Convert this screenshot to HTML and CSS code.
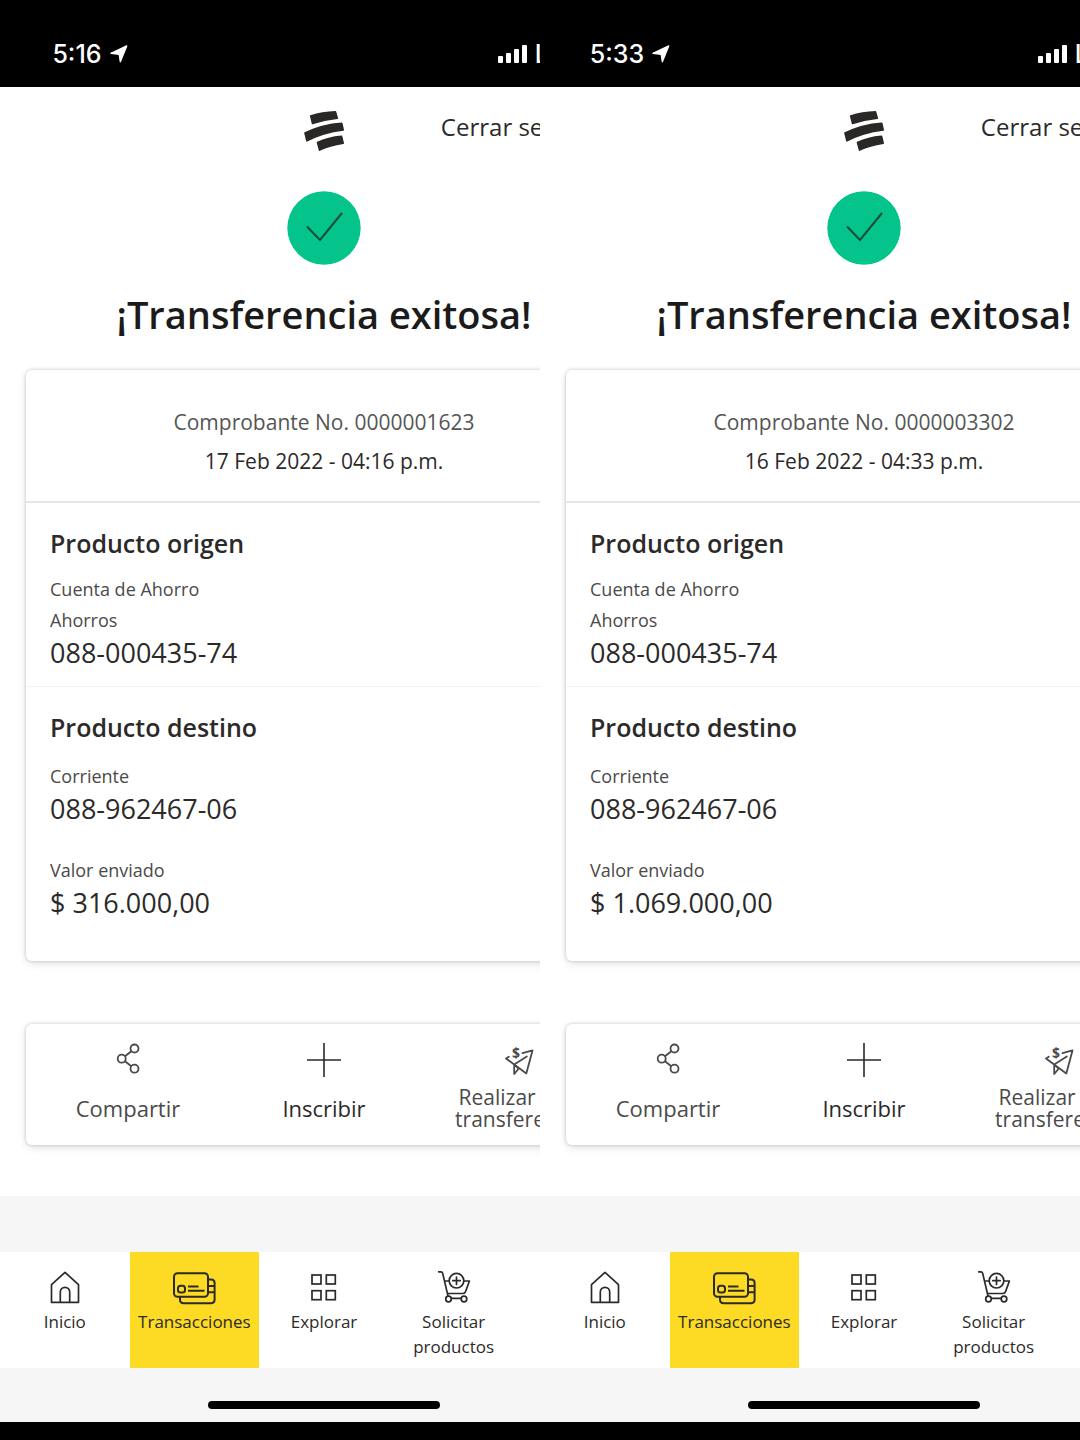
FILE: index.html
```
<!DOCTYPE html>
<html lang="es">
<head>
<meta charset="utf-8">
<meta name="viewport" content="width=device-width, initial-scale=1">
<title>Transferencia exitosa</title>
<link rel="stylesheet" href="styles.css">
</head>
<body>
<svg class="sprite" aria-hidden="true">
  <symbol id="i-location" viewBox="0 0 18 18"><path d="M1 8.300 16.700 1 10.300 16.700 9.300 9.400z" fill="currentColor" stroke="currentColor" stroke-width="1.400" stroke-linejoin="round"/></symbol>
  <symbol id="i-signal" viewBox="0 0 30 18"><g fill="currentColor"><rect y="11" width="5" height="7" rx="1"/><rect x="8" y="8" width="5" height="10" rx="1"/><rect x="16" y="4" width="5" height="14" rx="1"/><rect x="24" width="5" height="18" rx="1"/></g></symbol>
  <symbol id="i-logo" viewBox="0 0 40 40"><g fill="#2a2827" stroke="#2a2827" stroke-width="1.600" stroke-linejoin="round"><path d="M6.700 5Q18 1.500 31.500.9L33.300 7.300Q20 8.700 8.500 12.400z"/><path d="M1 22Q18 13.500 37.700 12.200L39.200 19Q19 21.500 2.900 29.900z"/><path d="M13.500 31.500Q24 26.500 37.500 25.300L39.200 32.300Q26 34.500 15.500 39.100z"/></g></symbol>
  <symbol id="i-check" viewBox="0 0 74 74"><circle cx="37" cy="37" r="36.700" fill="#04c48b"/><path d="M20 35.500 33 49 55 22" fill="none" stroke="#1d4a3c" stroke-width="2"/></symbol>
  <symbol id="i-share" viewBox="0 0 36 36"><g fill="none" stroke="currentColor" stroke-width="1.800"><circle cx="24.500" cy="6.500" r="4"/><circle cx="11.700" cy="16.700" r="4"/><circle cx="24.500" cy="26.700" r="4"/><path d="m15 14.200 6.300-5M15 19.200l6.300 5"/></g></symbol>
  <symbol id="i-plus" viewBox="0 0 36 36"><path d="M18 1v34M1 18h34" fill="none" stroke="currentColor" stroke-width="1.600"/></symbol>
  <symbol id="i-send" viewBox="0 0 36 36"><path d="m20.500 11.200 10-2.800-6.200 23L4 16.500l2.800-1.700M24.800 14.500 12.200 22.500V32l4.400-5.300M12.200 22.500l4.400 4.200" fill="none" stroke="currentColor" stroke-width="1.800" stroke-linejoin="round" stroke-linecap="round"/><text x="14" y="15.500" text-anchor="middle" class="coin">$</text></symbol>
  <symbol id="i-home" viewBox="0 0 36 36"><path d="M4.500 33.300V15.700L18 3.300l13.500 12.400v17.600zM13.300 33V23a4.700 4.700 0 0 1 9.400 0v10" fill="none" stroke="currentColor" stroke-width="1.700" stroke-linejoin="round"/></symbol>
  <symbol id="i-cards" viewBox="0 0 48 36"><g fill="none" stroke="currentColor" stroke-width="2"><rect x="4" y="4.200" width="34" height="23.500" rx="3.500"/><path d="M10 28v2.500q0 3.800 3.800 3.800h27q3.800 0 3.800-3.800V14q0-3.500-3.500-3.500H38M38 17h6.500M38 23.300h6.500"/><rect x="8" y="16.800" width="7" height="6.800" rx="2.500"/><path d="M18 17.500h10.500M18 21.800h16.500"/></g></symbol>
  <symbol id="i-grid" viewBox="0 0 36 36"><g fill="none" stroke="currentColor" stroke-width="1.700"><rect x="6" y="6" width="9" height="9"/><rect x="20.300" y="6" width="9" height="9"/><rect x="6" y="21.700" width="9" height="9"/><rect x="20.300" y="21.700" width="9" height="9"/></g></symbol>
  <symbol id="i-cart" viewBox="0 0 36 36"><g fill="none" stroke="currentColor" stroke-width="1.700" stroke-linejoin="round" stroke-linecap="round"><path d="M2.700 2.800h2.200q1.400 0 1.800 1.600L12 27M8.500 12H13M28 12h5.400l-3.800 10.500q-.7 2-2.600 2H11.600M15.500 29.300h9.500"/><circle cx="20.500" cy="11.700" r="7.300"/><path d="M20.500 8v7.400M16.800 11.700h7.400"/><circle cx="12.500" cy="30" r="2.800"/><circle cx="28" cy="30" r="2.800"/></g></symbol>
</svg>

<main class="panes">
  <section class="pane" aria-label="Comprobante 0000001623">
    <div class="phone">
      <div class="status">
        <div class="clock"><span>5:16</span><svg class="arrow"><use href="#i-location"/></svg></div>
        <div class="network"><svg class="signal"><use href="#i-signal"/></svg><span>LTE</span></div>
      </div>
      <div class="screen">
        <header class="top">
          <svg class="logo" role="img" aria-label="Inicio"><use href="#i-logo"/></svg>
          <a class="logout" href="#">Cerrar sesión</a>
        </header>
        <svg class="check"><use href="#i-check"/></svg>
        <h1 class="title">¡Transferencia exitosa!</h1>
        <article class="card">
          <div class="receipt">
            <p class="number">Comprobante No. 0000001623</p>
            <p class="date">17 Feb 2022 - 04:16 p.m.</p>
          </div>
          <section class="product">
            <h2>Producto origen</h2>
            <p class="label">Cuenta de Ahorro</p>
            <p class="label">Ahorros</p>
            <p class="value">088-000435-74</p>
          </section>
          <section class="product target">
            <h2>Producto destino</h2>
            <p class="label">Corriente</p>
            <p class="value">088-962467-06</p>
            <p class="label sent">Valor enviado</p>
            <p class="value">$ 316.000,00</p>
          </section>
        </article>
        <div class="card actions">
          <button type="button"><svg class="icon"><use href="#i-share"/></svg><span>Compartir</span></button>
          <button type="button" class="strong"><svg class="icon"><use href="#i-plus"/></svg><span>Inscribir</span></button>
          <button type="button" class="long"><svg class="icon"><use href="#i-send"/></svg><span>Realizar otra<br>transferencia</span></button>
        </div>
      </div>
      <nav class="tabs">
        <a href="#"><svg class="icon"><use href="#i-home"/></svg>Inicio</a>
        <a href="#" class="active" aria-current="page"><svg class="icon wide"><use href="#i-cards"/></svg>Transacciones</a>
        <a href="#"><svg class="icon"><use href="#i-grid"/></svg>Explorar</a>
        <a href="#"><svg class="icon"><use href="#i-cart"/></svg>Solicitar productos</a>
      </nav>
      <div class="home"><span></span></div>
    </div>
  </section>

  <section class="pane" aria-label="Comprobante 0000003302">
    <div class="phone">
      <div class="status">
        <div class="clock"><span>5:33</span><svg class="arrow"><use href="#i-location"/></svg></div>
        <div class="network"><svg class="signal"><use href="#i-signal"/></svg><span>LTE</span></div>
      </div>
      <div class="screen">
        <header class="top">
          <svg class="logo" role="img" aria-label="Inicio"><use href="#i-logo"/></svg>
          <a class="logout" href="#">Cerrar sesión</a>
        </header>
        <svg class="check"><use href="#i-check"/></svg>
        <h1 class="title">¡Transferencia exitosa!</h1>
        <article class="card">
          <div class="receipt">
            <p class="number">Comprobante No. 0000003302</p>
            <p class="date">16 Feb 2022 - 04:33 p.m.</p>
          </div>
          <section class="product">
            <h2>Producto origen</h2>
            <p class="label">Cuenta de Ahorro</p>
            <p class="label">Ahorros</p>
            <p class="value">088-000435-74</p>
          </section>
          <section class="product target">
            <h2>Producto destino</h2>
            <p class="label">Corriente</p>
            <p class="value">088-962467-06</p>
            <p class="label sent">Valor enviado</p>
            <p class="value">$ 1.069.000,00</p>
          </section>
        </article>
        <div class="card actions">
          <button type="button"><svg class="icon"><use href="#i-share"/></svg><span>Compartir</span></button>
          <button type="button" class="strong"><svg class="icon"><use href="#i-plus"/></svg><span>Inscribir</span></button>
          <button type="button" class="long"><svg class="icon"><use href="#i-send"/></svg><span>Realizar otra<br>transferencia</span></button>
        </div>
      </div>
      <nav class="tabs">
        <a href="#"><svg class="icon"><use href="#i-home"/></svg>Inicio</a>
        <a href="#" class="active" aria-current="page"><svg class="icon wide"><use href="#i-cards"/></svg>Transacciones</a>
        <a href="#"><svg class="icon"><use href="#i-grid"/></svg>Explorar</a>
        <a href="#"><svg class="icon"><use href="#i-cart"/></svg>Solicitar productos</a>
      </nav>
      <div class="home"><span></span></div>
    </div>
  </section>
</main>
</body>
</html>
```

FILE: styles.css
```
* {
  box-sizing: border-box;
}

body {
  margin: 0;
  background: #000;
  color: #2c2a29;
  font-family: "Open Sans", "Noto Sans", sans-serif;
}

h1, h2, p {
  margin: 0;
}

a {
  color: inherit;
  text-decoration: none;
}

.sprite {
  display: none;
}

.panes {
  display: grid;
  grid-template-columns: 1fr 1fr;
}

/* Each pane shows the left five sixths of a phone screen. */
.pane {
  overflow: hidden;
  padding-bottom: 18px;
}

.phone {
  width: 120%;
  background: #f6f6f6;
}

.status {
  display: flex;
  align-items: center;
  justify-content: space-between;
  height: 87px;
  padding: 20px 70px 0 0;
  background: #000;
  color: #fff;
  font-family: Inter, sans-serif;
  font-size: 25px;
  font-weight: 500;
}

.clock {
  display: flex;
  align-items: center;
  justify-content: center;
  gap: 8px;
  width: 180px;
}

.arrow {
  width: 18px;
  height: 18px;
}

.network {
  display: flex;
  align-items: center;
  gap: 7px;
}

.signal {
  width: 30px;
  height: 18px;
}

.screen {
  display: flex;
  flex-direction: column;
  padding: 24px 26px 51px;
  background: #fff;
}

.top {
  display: grid;
  grid-template-columns: 1fr auto 1fr;
  align-items: start;
}

.logo {
  grid-column: 2;
  width: 40px;
  height: 40px;
}

.logout {
  justify-self: end;
  padding-right: 32px;
  font-size: 24px;
  line-height: 31px;
}

.check {
  align-self: center;
  width: 74px;
  height: 74px;
  margin-top: 40px;
}

.title {
  margin: 24px 0 31px;
  color: #1c1b1b;
  font-size: 38px;
  font-weight: 600;
  line-height: 50px;
  text-align: center;
  white-space: nowrap;
}

.card {
  border-radius: 6px;
  background: #fff;
  box-shadow: 0 0 3px 1px rgba(0, 0, 0, .12), 0 3px 8px rgba(0, 0, 0, .1);
}

.receipt {
  padding: 33px 24px 20px;
  border-bottom: 2px solid #e6e6e6;
  font-size: 21px;
  line-height: 39px;
  text-align: center;
}

.number {
  color: #555;
}

.product {
  padding: 24px 24px 16px;
}

.product h2 {
  margin-bottom: 15px;
  font-size: 25px;
  font-weight: 600;
  line-height: 32px;
}

.target {
  padding-bottom: 41px;
  border-top: 1px solid #f2f2f2;
}

.target h2 {
  margin-bottom: 18px;
}

.label {
  color: #4b4a4a;
  font-size: 18px;
  line-height: 31px;
}

.sent {
  margin-top: 29px;
}

.value {
  font-size: 27px;
  line-height: 34px;
}

.actions {
  display: grid;
  grid-template-columns: repeat(3, 1fr);
  margin-top: 63px;
  padding: 18px 4px 15px;
}

.actions button {
  display: flex;
  flex-direction: column;
  align-items: center;
  gap: 8px;
  padding: 0;
  border: 0;
  background: none;
  color: #4b4a4a;
  font: 22px/22px "Open Sans", "Noto Sans", sans-serif;
  white-space: nowrap;
}

.actions .strong {
  color: #2c2a29;
}

.actions .long {
  font-size: 21px;
}

.actions span {
  display: flex;
  align-items: center;
  min-height: 44px;
}

.icon {
  display: block;
  width: 36px;
  height: 36px;
}

.wide {
  width: 48px;
}

.coin {
  fill: currentColor;
  font: 700 14px "Open Sans", sans-serif;
}

.tabs {
  display: grid;
  grid-template-columns: repeat(5, minmax(0, 1fr));
  margin-top: 56px;
  background: #fff;
}

.tabs a {
  display: flex;
  flex-direction: column;
  align-items: center;
  gap: 4px;
  min-height: 116px;
  padding: 17px 8px 8px;
  font-size: 17px;
  line-height: 25px;
  text-align: center;
}

.tabs .active {
  background: #fdda24;
}

.home {
  display: flex;
  justify-content: center;
  padding: 33px 0 13px;
}

.home span {
  width: 232px;
  height: 8px;
  border-radius: 4px;
  background: #000;
}
```
